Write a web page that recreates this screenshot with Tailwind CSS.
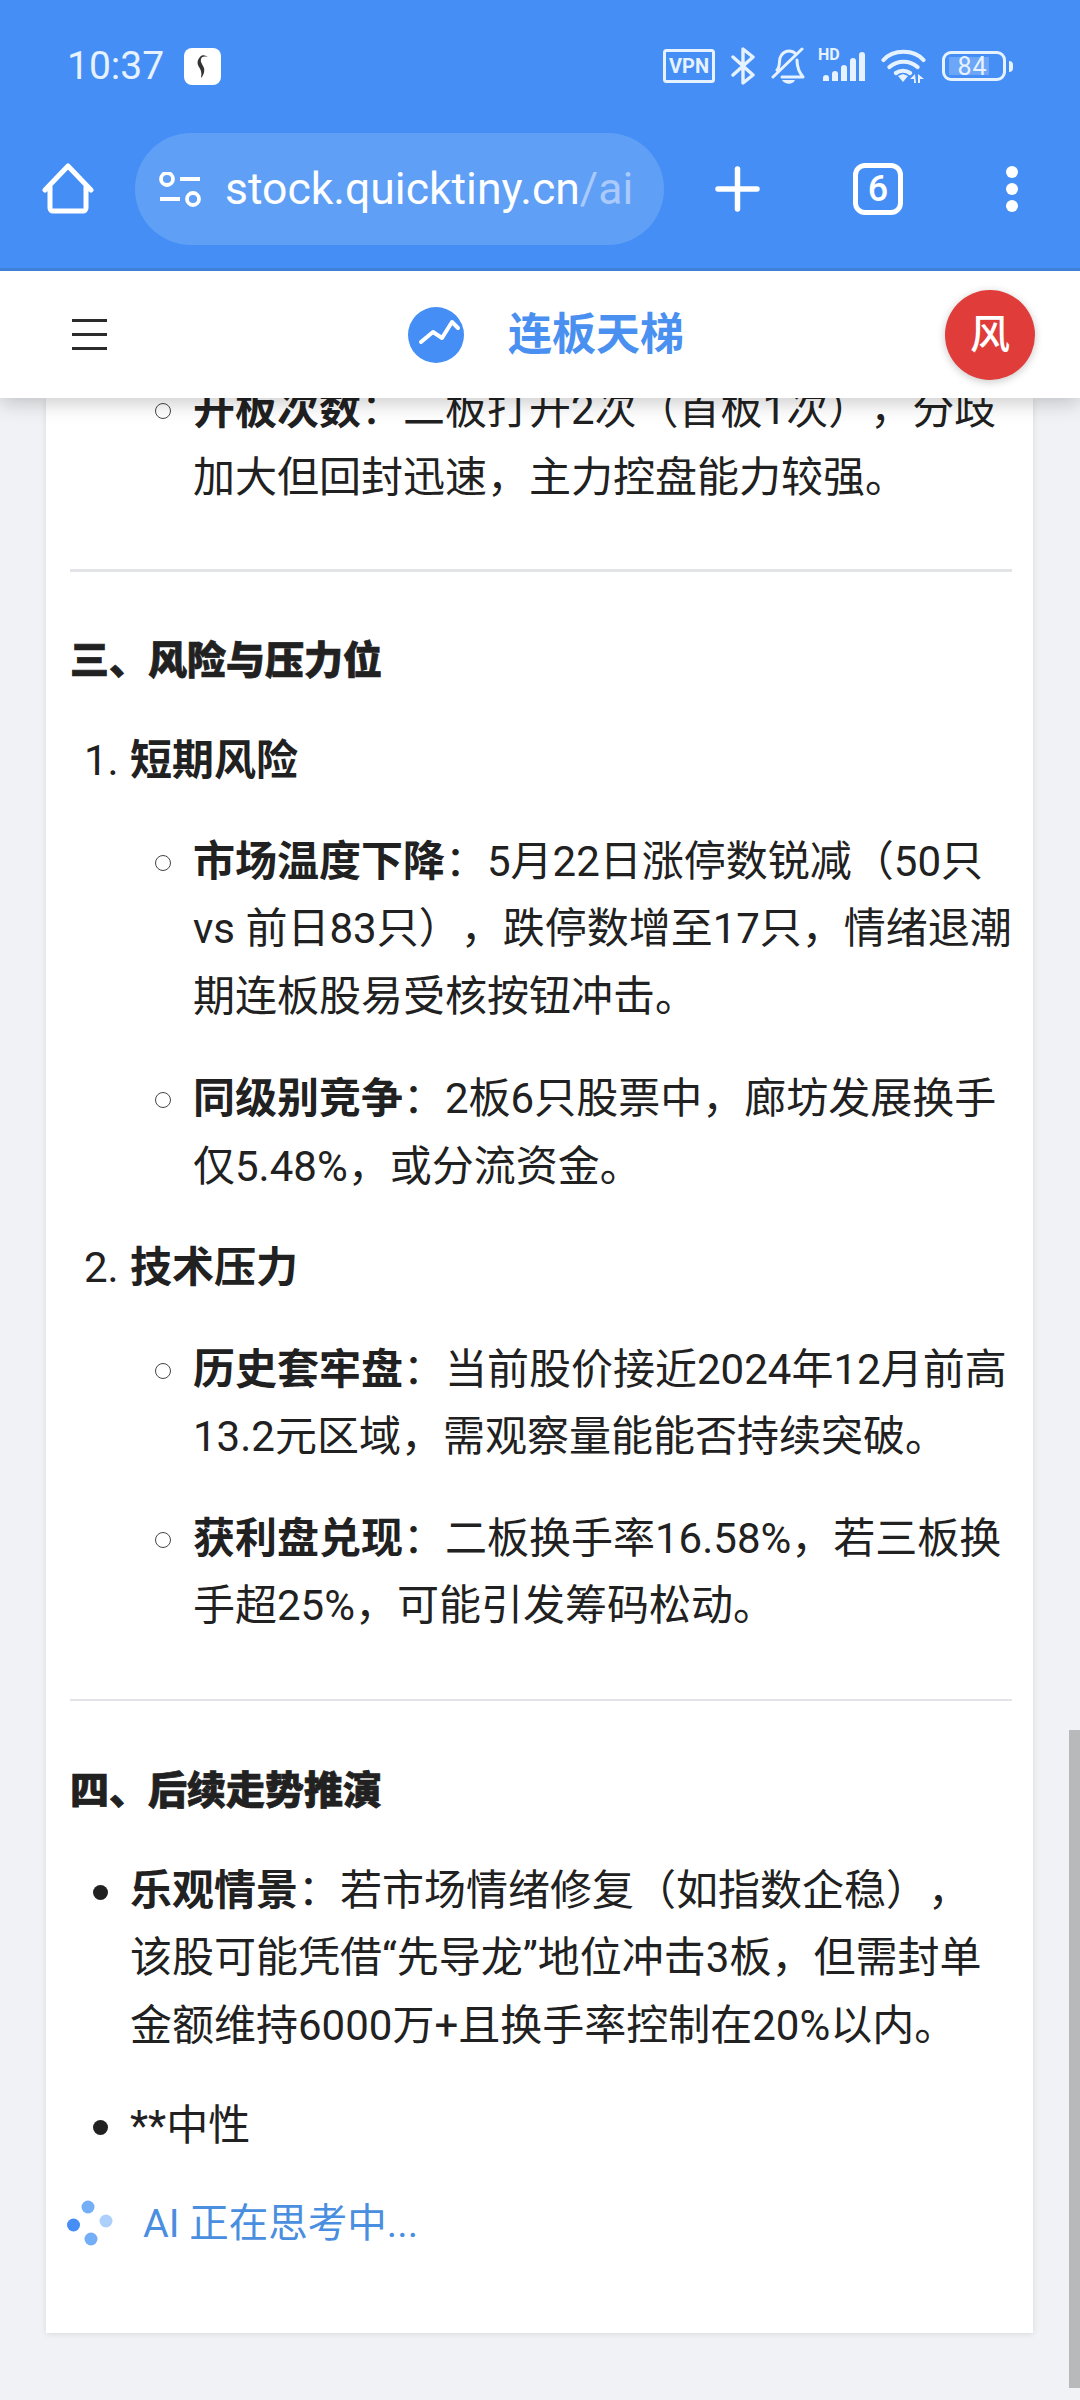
<!DOCTYPE html>
<html lang="zh-CN"><head><meta charset="utf-8"><script src="https://cdn.jsdelivr.net/npm/@tailwindcss/browser@4"></script></head>
<body class="m-0">
<div class="relative w-[1080px] h-[2400px] overflow-hidden bg-[#f0f2f5] text-[#212121] font-['Roboto','Noto_Sans_CJK_SC',sans-serif]">
  <!-- browser chrome -->
  <div class="relative z-20 h-[271px] bg-[#458ef5] border-b-[3px] border-[#3f80d8] text-white">
    <div class="h-[133px] pt-[48px] pl-[67px] flex items-start">
      <div class="h-[36px] flex items-center gap-[20px] w-[596px]">
        <span class="text-[39px] leading-[36px] text-[#e6f2ff]">10:37</span>
        <span class="w-[37px] h-[37px] rounded-[8px] bg-white flex items-center justify-center">
          <svg width="14" height="26" viewBox="0 0 14 26"><path d="M13 5C10 2 6 1 4 4C1 7 1 11 3 14C5 17 6 20 5 25C7 23 9 19 8 15C7 12 4 9 5 6C6 3 10 3 13 5z" fill="#333"/></svg>
        </span>
      </div>
      <div class="h-[36px] flex items-center text-[#e6f2ff]">
        <svg width="52" height="34" viewBox="0 0 52 34" fill="none"><rect x="1.5" y="1.5" width="49" height="31" rx="2" stroke="currentColor" stroke-width="3"/><text x="26" y="24" text-anchor="middle" font-family="Roboto" font-weight="700" font-size="20" fill="currentColor">VPN</text></svg>
        <svg class="ml-[16px]" width="24" height="38" viewBox="0 0 24 38" fill="none" stroke="currentColor" stroke-width="3.4" stroke-linejoin="round" stroke-linecap="round"><path d="M2 10l20 18-10 8V2l10 8L2 28"/></svg>
        <svg class="ml-[16px]" width="35" height="38" viewBox="0 0 35 38" fill="none" stroke="currentColor" stroke-width="3" stroke-linecap="round" stroke-linejoin="round"><path d="M2 30L31 2M6 23c3-3 2-7 3-12 1-4 5-7 9-7 3 0 5 1 7 3M26 13c0 6 1 11 6 17H11"/><path d="M11 33h13c-2 5-10 5-13 0z" fill="currentColor" stroke="none"/></svg>
        <div class="ml-[12px] relative w-[50px] h-[36px] flex items-end gap-[3px] pb-[3px]">
          <span class="absolute left-0 top-[-1px] text-[16px] leading-[16px] font-bold">HD</span>
          <span class="ml-[5px] w-[6px] h-[6px] rounded-t-full bg-current"></span>
          <span class="w-[6px] h-[10px] rounded-t-full bg-current"></span>
          <span class="w-[6px] h-[16px] rounded-t-full bg-current"></span>
          <span class="w-[6px] h-[23px] rounded-t-full bg-current"></span>
          <span class="w-[6px] h-[29px] rounded-t-full bg-current"></span>
        </div>
        <svg class="ml-[13px]" width="45" height="34" viewBox="0 0 45 34" fill="none" stroke="currentColor" stroke-width="4.2" stroke-linecap="round"><path d="M2.5 11C12 0 33 0 42.5 11M8.5 18c8-7 20-7 28 0M15 24c4-3 10-3 14 0"/><path d="M17 27l5-2 5 2-5 6z" fill="currentColor" stroke="none"/><path d="M34 25l-5 5h4v4h2zM37 25v9h2v-4h4z" fill="currentColor" stroke="none"/></svg>
        <div class="ml-[16px] relative w-[64px] h-[30px] rounded-[9px] border-[3px] border-current">
          <span class="absolute left-[4px] top-[3px] w-[40px] h-[18px] bg-[#6ea6f7]"></span>
          <span class="absolute inset-0 flex items-center justify-center text-[25px] leading-none tracking-[1px] pr-[3px]">84</span>
          <span class="absolute right-[-10px] top-[7px] w-[4px] h-[11px] rounded-r-full bg-current"></span>
        </div>
      </div>
    </div>
    <div class="h-[112px] flex items-center">
      <svg class="ml-[42px]" width="52" height="52" viewBox="0 0 52 52" fill="none" stroke="white" stroke-width="5" stroke-linejoin="round" stroke-linecap="round"><path d="M3 27L26 3l23 24M8 24v21a3 3 0 0 0 3 3h30a3 3 0 0 0 3-3V24"/></svg>
      <div class="ml-[41px] w-[529px] h-[112px] rounded-full bg-[#609ff6] flex items-center">
        <svg class="ml-[24px]" width="42" height="35" viewBox="0 0 42 35" fill="none" stroke="white" stroke-width="3.8"><circle cx="8" cy="7" r="6"/><path d="M21 7h20M1 27h20"/><circle cx="34" cy="27" r="6"/></svg>
        <span class="ml-[24px] text-[44.5px] leading-none whitespace-nowrap">stock.quicktiny.cn<span class="text-[#a9cafb]">/ai</span></span>
      </div>
      <svg class="ml-[51px]" width="45" height="46" viewBox="0 0 45 46" stroke="white" stroke-width="5.5" stroke-linecap="round"><path d="M22.5 3v40M3 23h39"/></svg>
      <div class="ml-[93px] w-[50px] h-[52px] rounded-[12px] border-[5px] border-white flex items-center justify-center text-[36px] font-medium leading-none">6</div>
      <div class="ml-[103px] flex flex-col gap-[5px]">
        <span class="w-[12px] h-[12px] rounded-full bg-white"></span>
        <span class="w-[12px] h-[12px] rounded-full bg-white"></span>
        <span class="w-[12px] h-[12px] rounded-full bg-white"></span>
      </div>
    </div>
  </div>
  <!-- app header -->
  <header class="relative z-10 h-[127px] bg-white shadow-[0_4px_20px_rgba(0,0,0,0.22)] flex items-center pl-[72px]">
    <div class="w-[35px] flex flex-col gap-[11px]">
      <span class="h-[3px] bg-[#2b2b2b]"></span><span class="h-[3px] bg-[#2b2b2b]"></span><span class="h-[3px] bg-[#2b2b2b]"></span>
    </div>
    <svg class="ml-[301px]" width="56" height="56" viewBox="0 0 56 56"><circle cx="28" cy="28" r="28" fill="#458ef5"/><path d="M13 35l12-10 9 6 10-16 6 6" fill="none" stroke="white" stroke-width="4" stroke-linecap="round" stroke-linejoin="round"/></svg>
    <span class="ml-[44px] w-[176px] text-[44px] leading-none font-bold text-[#4a90f0]">连板天梯</span>
    <div class="ml-[261px] w-[90px] h-[90px] rounded-full bg-[#e03c3a] shadow-[0_2px_8px_rgba(0,0,0,0.22)] text-white text-[40px] font-medium flex items-center justify-center">风</div>
  </header>
  <!-- article -->
  <main class="relative mx-[46px] w-[987px] h-[1935px] bg-white shadow-[0_1px_6px_rgba(0,0,0,0.1)] pl-[24px] pr-[21px] text-[42px] leading-[67.5px] [text-spacing-trim:space-all] overflow-hidden">
    <ul class="pl-[123px] mt-[-22px] list-none">
      <li class="relative before:absolute before:left-[-38px] before:top-[27px] before:w-[16px] before:h-[16px] before:rounded-full before:border-[1.5px] before:border-[#444]"><b>开板次数</b>：二板打开2次（首板1次），分歧加大但回封迅速，主力控盘能力较强。</li>
    </ul>
    <hr class="mt-[58px] border-0 h-[3px] bg-[#e2e4e7]">
    <h3 class="mt-[64px] font-black [-webkit-text-stroke:0.7px_#212121] text-[39px] leading-[50px]">三、风险与压力位</h3>
    <ol class="mt-[41px] list-none pl-[60px]">
      <li class="relative"><span class="absolute left-[-46px] top-0">1.</span><b>短期风险</b>
        <ul class="list-none pl-[63px] mt-[33px]">
          <li class="relative before:absolute before:left-[-38px] before:top-[27px] before:w-[16px] before:h-[16px] before:rounded-full before:border-[1.5px] before:border-[#444]"><b>市场温度下降</b>：5月22日涨停数锐减（50只 vs 前日83只），跌停数增至17只，情绪退潮期连板股易受核按钮冲击。</li>
          <li class="relative mt-[35px] before:absolute before:left-[-38px] before:top-[27px] before:w-[16px] before:h-[16px] before:rounded-full before:border-[1.5px] before:border-[#444]"><b>同级别竞争</b>：2板6只股票中，廊坊发展换手仅5.48%，或分流资金。</li>
        </ul>
      </li>
      <li class="relative mt-[34px]"><span class="absolute left-[-46px] top-0">2.</span><b>技术压力</b>
        <ul class="list-none pl-[63px] mt-[34px]">
          <li class="relative before:absolute before:left-[-38px] before:top-[27px] before:w-[16px] before:h-[16px] before:rounded-full before:border-[1.5px] before:border-[#444]"><b>历史套牢盘</b>：当前股价接近2024年12月前高13.2元区域，需观察量能能否持续突破。</li>
          <li class="relative mt-[34px] before:absolute before:left-[-38px] before:top-[27px] before:w-[16px] before:h-[16px] before:rounded-full before:border-[1.5px] before:border-[#444]"><b>获利盘兑现</b>：二板换手率16.58%，若三板换手超25%，可能引发筹码松动。</li>
        </ul>
      </li>
    </ol>
    <hr class="mt-[59px] border-0 h-[2px] bg-[#e2e4e7]">
    <h3 class="mt-[65px] font-black [-webkit-text-stroke:0.7px_#212121] text-[39px] leading-[50px]">四、后续走势推演</h3>
    <ul class="mt-[41px] list-none pl-[60px]">
      <li class="relative before:absolute before:left-[-37px] before:top-[28px] before:w-[15px] before:h-[15px] before:rounded-full before:bg-[#212121]"><b>乐观情景</b>：若市场情绪修复（如指数企稳），该股可能凭借“先导龙”地位冲击3板，但需封单金额维持6000万+且换手率控制在20%以内。</li>
      <li class="relative mt-[33px] before:absolute before:left-[-37px] before:top-[28px] before:w-[15px] before:h-[15px] before:rounded-full before:bg-[#212121]">**中性</li>
    </ul>
    <div class="mt-[30px] ml-[-3px] flex items-center gap-[30px] text-[39.5px] text-[#4a8ee0]">
      <svg width="46" height="46" viewBox="0 0 46 46"><circle cx="21" cy="7" r="6.5" fill="#74aef7"/><circle cx="6.5" cy="25" r="6.5" fill="#458ef5"/><circle cx="39" cy="21" r="6.5" fill="#acd0fb"/><circle cx="24" cy="39" r="6.5" fill="#74aef7"/></svg>
      <span>AI 正在思考中...</span>
    </div>
  </main>
  <div class="absolute right-0 top-[1730px] w-[11px] h-[658px] bg-[#b8b9bb]"></div>
</div>
</body></html>
